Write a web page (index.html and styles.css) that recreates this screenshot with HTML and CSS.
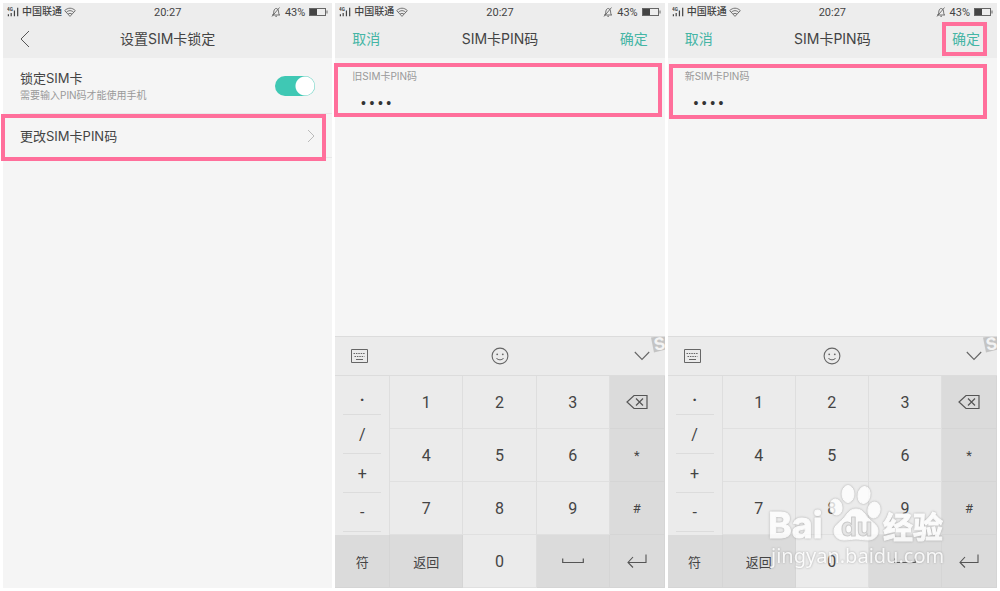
FILE: index.html
```html
<!DOCTYPE html>
<html lang="zh-CN">
<head>
    <meta charset="UTF-8">
    <meta name="viewport" content="width=device-width, initial-scale=1.0">
    <title>设置SIM卡锁定</title>
    <link rel="stylesheet" href="styles.css">
</head>
<body>
    <!-- shared icons -->
    <svg class="sprite" width="0" height="0">
        <symbol id="signal" viewBox="0 0 14 10">
            <text x="0" y="4" font-size="5" font-weight="700">4G</text>
            <path d="M1.5 7.5v2M4.5 6v3.5M8 3.5v6M11.5 .5v9" fill="none" stroke="#444" stroke-width="1.3"/>
        </symbol>
        <symbol id="wifi" viewBox="0 0 12 10">
            <path d="M.7 3.6C3.8.4 8.2.4 11.3 3.6L6 9.4zM2.3 5.3c2.2-2.2 5.2-2.2 7.4 0M4 7.2c1.2-1.1 2.8-1.1 4 0" fill="none" stroke="#555" stroke-width=".8"/>
        </symbol>
        <symbol id="mute" viewBox="0 0 10 10">
            <path d="M1 8h8M2 8c.8-1.2.6-2.5.9-4C3.3 2.4 4 1.5 5.2 1.5S7.300 2.600 7.500 4c.2 1.500.1 2.800.9 4M4.300 9.300h1.700M1 9.500 8.500.5" fill="none" stroke="#555" stroke-width=".8"/>
        </symbol>
        <symbol id="battery" viewBox="0 0 19 8">
            <rect x=".5" y=".5" width="16" height="7" fill="none" stroke="#666"/>
            <rect x="1" y="1" width="7" height="6" fill="#444"/>
            <path d="M18 2.500v3" stroke="#666"/>
        </symbol>
        <symbol id="board" viewBox="0 0 18 16">
            <path d="M1 1.500h16v13H1z" fill="none" stroke="#666"/>
            <path d="M3 5.500h12M4 8.500h10" fill="none" stroke="#666" stroke-dasharray="1.500 .9"/>
            <path d="M5.500 11.500h7" stroke="#666"/>
        </symbol>
        <symbol id="smile" viewBox="0 0 18 18">
            <circle cx="9" cy="9" r="7.900" fill="none" stroke="#666" stroke-width="1.100"/>
            <circle cx="6.200" cy="7.300" r=".9" fill="#666"/>
            <circle cx="11.800" cy="7.300" r=".9" fill="#666"/>
            <path d="M5.300 11c1.700 2.400 5.700 2.400 7.400 0" fill="none" stroke="#666"/>
        </symbol>
        <symbol id="down" viewBox="0 0 16 10">
            <path d="m.8 1 7.200 7.500L15.200 1" fill="none" stroke="#666" stroke-width="1.100"/>
        </symbol>
        <symbol id="sogou" viewBox="0 0 14 16">
            <path d="M0 .5 17-2v14L3 15.500z" fill="#c4c4c4"/>
            <text x="3" y="13" font-size="17" font-weight="700" fill="#f3f3f3" transform="rotate(-10 8 8)">S</text>
        </symbol>
        <symbol id="delete" viewBox="0 0 22 16">
            <path d="M8 1.500h13v13H8L1 8zM10 4.500l7 7M17 4.500l-7 7" fill="none" stroke="#555" stroke-width="1.200"/>
        </symbol>
        <symbol id="space" viewBox="0 0 22 6">
            <path d="M.7.500v4h20.600v-4" fill="none" stroke="#555" stroke-width="1.200"/>
        </symbol>
        <symbol id="enter" viewBox="0 0 20 14">
            <path d="M19 .5v8H1M6 3 1 8.500l5 5" fill="none" stroke="#555" stroke-width="1.100"/>
        </symbol>
    </svg>

    <main class="phones">
        <section class="phone">
            <header class="top">
                <div class="status">
                    <span class="carrier"><svg class="signal"><use href="#signal"/></svg>中国联通<svg class="wifi"><use href="#wifi"/></svg></span>
                    <span class="time">20:27</span>
                    <span class="power"><svg class="mute"><use href="#mute"/></svg>43%<svg class="battery"><use href="#battery"/></svg></span>
                </div>
                <div class="nav">
                    <button class="back" type="button" aria-label="返回">
                        <svg width="10" height="18" viewBox="0 0 10 18"><path d="M9 1 1 9l8 8" fill="none" stroke="#555"/></svg>
                    </button>
                    <h1>设置SIM卡锁定</h1>
                </div>
            </header>
            <div class="row">
                <label for="lock">锁定SIM卡<small>需要输入PIN码才能使用手机</small></label>
                <input class="switch" type="checkbox" id="lock" checked>
            </div>
            <a class="row change" href="#pin">
                更改SIM卡PIN码
                <svg width="8" height="14" viewBox="0 0 8 14"><path d="m1 1 6 6-6 6" fill="none" stroke="#bbb"/></svg>
                <span class="mark mark-row"></span>
            </a>
        </section>

        <section class="phone" id="pin">
            <header class="top">
                <div class="status">
                    <span class="carrier"><svg class="signal"><use href="#signal"/></svg>中国联通<svg class="wifi"><use href="#wifi"/></svg></span>
                    <span class="time">20:27</span>
                    <span class="power"><svg class="mute"><use href="#mute"/></svg>43%<svg class="battery"><use href="#battery"/></svg></span>
                </div>
                <div class="nav">
                    <button class="action" type="button">取消</button>
                    <h1>SIM卡PIN码</h1>
                    <button class="action ok" type="button">确定</button>
                </div>
            </header>
            <div class="field">
                <label for="oldPin">旧SIM卡PIN码</label>
                <input type="password" id="oldPin" value="1234">
                <span class="mark mark-old"></span>
            </div>
            <div class="keyboard">
                <div class="tools">
                    <button type="button" aria-label="键盘"><svg class="board"><use href="#board"/></svg></button>
                    <button type="button" aria-label="表情"><svg class="smile"><use href="#smile"/></svg></button>
                    <button type="button" aria-label="收起"><svg class="down"><use href="#down"/></svg></button>
                    <svg class="sogou"><use href="#sogou"/></svg>
                </div>
                <div class="keys">
                    <div class="symbols">
                        <button class="dot" type="button">·</button>
                        <button type="button">/</button>
                        <button type="button">+</button>
                        <button type="button">-</button>
                    </div>
                    <button type="button">1</button>
                    <button type="button">2</button>
                    <button type="button">3</button>
                    <button class="dark" type="button" aria-label="删除"><svg class="delete"><use href="#delete"/></svg></button>
                    <button type="button">4</button>
                    <button type="button">5</button>
                    <button type="button">6</button>
                    <button class="dark small" type="button">*</button>
                    <button type="button">7</button>
                    <button type="button">8</button>
                    <button type="button">9</button>
                    <button class="dark small" type="button">#</button>
                    <button class="dark small" type="button">符</button>
                    <button class="dark small" type="button">返回</button>
                    <button type="button">0</button>
                    <button class="dark" type="button" aria-label="空格"><svg class="space"><use href="#space"/></svg></button>
                    <button class="dark" type="button" aria-label="换行"><svg class="enter"><use href="#enter"/></svg></button>
                </div>
            </div>
        </section>

        <section class="phone">
            <header class="top">
                <div class="status">
                    <span class="carrier"><svg class="signal"><use href="#signal"/></svg>中国联通<svg class="wifi"><use href="#wifi"/></svg></span>
                    <span class="time">20:27</span>
                    <span class="power"><svg class="mute"><use href="#mute"/></svg>43%<svg class="battery"><use href="#battery"/></svg></span>
                </div>
                <div class="nav">
                    <button class="action" type="button">取消</button>
                    <h1>SIM卡PIN码</h1>
                    <button class="action ok" type="button">确定<span class="mark mark-ok"></span></button>
                </div>
            </header>
            <div class="field">
                <label for="newPin">新SIM卡PIN码</label>
                <input type="password" id="newPin" value="1234">
                <span class="mark mark-new"></span>
            </div>
            <div class="keyboard">
                <div class="tools">
                    <button type="button" aria-label="键盘"><svg class="board"><use href="#board"/></svg></button>
                    <button type="button" aria-label="表情"><svg class="smile"><use href="#smile"/></svg></button>
                    <button type="button" aria-label="收起"><svg class="down"><use href="#down"/></svg></button>
                    <svg class="sogou"><use href="#sogou"/></svg>
                </div>
                <div class="keys">
                    <div class="symbols">
                        <button class="dot" type="button">·</button>
                        <button type="button">/</button>
                        <button type="button">+</button>
                        <button type="button">-</button>
                    </div>
                    <button type="button">1</button>
                    <button type="button">2</button>
                    <button type="button">3</button>
                    <button class="dark" type="button" aria-label="删除"><svg class="delete"><use href="#delete"/></svg></button>
                    <button type="button">4</button>
                    <button type="button">5</button>
                    <button type="button">6</button>
                    <button class="dark small" type="button">*</button>
                    <button type="button">7</button>
                    <button type="button">8</button>
                    <button type="button">9</button>
                    <button class="dark small" type="button">#</button>
                    <button class="dark small" type="button">符</button>
                    <button class="dark small" type="button">返回</button>
                    <button type="button">0</button>
                    <button class="dark" type="button" aria-label="空格"><svg class="space"><use href="#space"/></svg></button>
                    <button class="dark" type="button" aria-label="换行"><svg class="enter"><use href="#enter"/></svg></button>
                </div>
            </div>
            <!-- site watermark -->
            <svg class="watermark" width="184" height="90" viewBox="0 0 184 90">
                <g class="logo">
                    <text x="3" y="56" font-size="36">Bai</text>
                    <ellipse cx="71" cy="25" rx="6" ry="8" transform="rotate(-12 71 25)"/>
                    <ellipse cx="83" cy="12" rx="6" ry="8.500"/>
                    <ellipse cx="99" cy="13" rx="6" ry="8.500" transform="rotate(10 99 13)"/>
                    <ellipse cx="109" cy="28" rx="6" ry="8" transform="rotate(10 109 28)"/>
                    <path d="M91 27c-7 0-9 6-13 10-4 4-9 7-9 12 0 6 5 9 10 9 5 0 8-1 12-1s7 1 12 1c5 0 10-3 10-9s-5-8-9-12c-4-4-6-10-13-10z"/>
                    <text class="du" x="76" y="54" font-size="25">du</text>
                    <text class="cn" x="118" y="56" font-size="30">经验</text>
                </g>
                <text class="site" x="6" y="81" font-size="20">jingyan.baidu.com</text>
            </svg>
        </section>
    </main>
</body>
</html>
```

FILE: styles.css
```css
* {
    box-sizing: border-box;
}
body {
    margin: 0;
    background-color: #fff;
    color: #444;
    font-family: Inter, "Noto Sans CJK SC", sans-serif;
    font-size: 13px;
    overflow-x: hidden;
}
button {
    margin: 0;
    padding: 0;
    border: none;
    background: none;
    color: inherit;
    font: inherit;
    cursor: pointer;
}
svg {
    display: block;
}
.sprite {
    position: absolute;
}
.phones {
    display: grid;
    grid-template-columns: repeat(3, 1fr);
    gap: 3px;
    min-height: 100vh;
    padding: 3px;
}
.phone {
    display: flex;
    flex-direction: column;
    position: relative;
    background-color: #f5f5f5;
}
.top {
    height: 55px;
    background-color: #ededed;
}
/* status bar */
.status {
    display: grid;
    grid-template-columns: 1fr auto 1fr;
    align-items: center;
    height: 18px;
    padding: 0 4px;
    font-family: Roboto, "Noto Sans CJK SC", sans-serif;
    font-size: 11px;
}
.carrier,
.power {
    display: flex;
    align-items: center;
    gap: 2px;
}
.carrier {
    font-size: 10px;
    font-weight: 500;
    line-height: 12px;
}
.power {
    justify-content: flex-end;
    gap: 4px;
}
.signal {
    width: 13px;
    height: 10px;
    fill: #444;
}
.wifi {
    width: 12px;
    height: 10px;
}
.mute {
    width: 10px;
    height: 10px;
}
.battery {
    width: 19px;
    height: 8px;
}
.nav {
    display: grid;
    grid-template-columns: 1fr auto 1fr;
    align-items: center;
    height: 35px;
    padding: 0 17px;
}
.nav h1 {
    grid-column: 2;
    margin: 0;
    font-size: 14px;
    font-weight: 400;
    line-height: 20px;
}
.back {
    justify-self: start;
}
.action {
    justify-self: start;
    position: relative;
    color: #45b5a5;
    font-size: 14px;
    line-height: 20px;
}
.ok {
    justify-self: end;
}
/* settings rows */
.row {
    display: flex;
    justify-content: space-between;
    align-items: center;
    position: relative;
    height: 56px;
    margin-left: 17px;
    padding-right: 17px;
    border-bottom: 1px solid #e8e8e8;
    color: #444;
    text-decoration: none;
}
.row label {
    line-height: 19px;
}
.row small {
    display: block;
    color: #999;
    font-size: 10px;
    line-height: 15px;
}
.change {
    height: 44px;
}
.switch {
    appearance: none;
    width: 40px;
    height: 20px;
    margin: 0;
    border-radius: 10px;
    background: radial-gradient(circle at 30px 10px, #fff 9px, transparent 10px), linear-gradient(#3fc8b4, #3fc8b4);
}
.field {
    display: flex;
    flex-direction: column;
    position: relative;
    height: 60px;
    padding: 10px 17px 0;
}
.field label {
    color: #999;
    font-size: 10px;
    line-height: 16px;
}
.field input {
    width: 100%;
    height: 24px;
    margin-top: 8px;
    padding: 0 7px;
    border: none;
    outline: none;
    background: none;
    color: #333;
    font-family: "Liberation Mono", monospace;
    font-size: 14px;
}
/* pink frames around the step */
.mark {
    position: absolute;
    border: 4px solid #ff6f9b;
    pointer-events: none;
}
.mark-row {
    inset: 0 6px -4px -19px;
}
.mark-old {
    inset: 5px 3px 1px -1px;
}
.mark-new {
    inset: 6px 10px -1px 1px;
}
.mark-ok {
    inset: -7px -7px -7px -10px;
}
/* keyboard */
.keyboard {
    margin-top: auto;
    background-color: #ebebeb;
    border-top: 1px solid #dcdcdc;
}
.tools {
    display: grid;
    grid-template-columns: 1fr auto 1fr;
    align-items: center;
    position: relative;
    height: 38px;
    padding: 0 15px;
}
.tools button:first-child {
    justify-self: start;
}
.tools button:nth-child(3) {
    justify-self: end;
}
.board {
    width: 19px;
    height: 16px;
}
.smile {
    width: 18px;
    height: 18px;
}
.down {
    width: 16px;
    height: 10px;
}
.sogou {
    position: absolute;
    top: 0;
    right: 0;
    width: 14px;
    height: 16px;
}
.keys {
    display: grid;
    grid-template-columns: 3fr 4fr 4fr 4fr 3fr;
    grid-auto-rows: 53px;
    border-top: 1px solid #dcdcdc;
    font-family: Roboto, "Noto Sans CJK SC", sans-serif;
    font-size: 16px;
}
.keys > button {
    display: flex;
    justify-content: center;
    align-items: center;
    border-right: 1px solid #dedede;
    border-bottom: 1px solid #e0e0e0;
}
.keys > .dark {
    background-color: #dbdbdb;
    border-color: #d5d5d5;
}
.keys > .small {
    font-size: 13px;
}
.symbols {
    display: grid;
    grid-row: span 3;
    grid-template-rows: repeat(4, 39px);
    padding: 0 8px;
    border-right: 1px solid #dedede;
}
.symbols button {
    border-bottom: 1px solid #dcdcdc;
}
.symbols .dot {
    padding-top: 8px;
    font-weight: 700;
}
.delete {
    width: 22px;
    height: 16px;
}
.space {
    width: 22px;
    height: 6px;
}
.enter {
    width: 20px;
    height: 14px;
}
.watermark {
    position: absolute;
    right: 48px;
    bottom: 16px;
    overflow: visible;
    opacity: 0.8;
    pointer-events: none;
    fill: #fff;
    filter: drop-shadow(0 0 1px #999);
}
.logo {
    font-family: Inter, "Noto Sans CJK SC", sans-serif;
    font-weight: 700;
    stroke: #fff;
    stroke-width: 1px;
    stroke-linejoin: round;
}
.logo .du {
    fill: #e4e4e4;
    stroke: #c4c4c4;
}
.site {
    font-family: "Noto Sans", sans-serif;
}
```
